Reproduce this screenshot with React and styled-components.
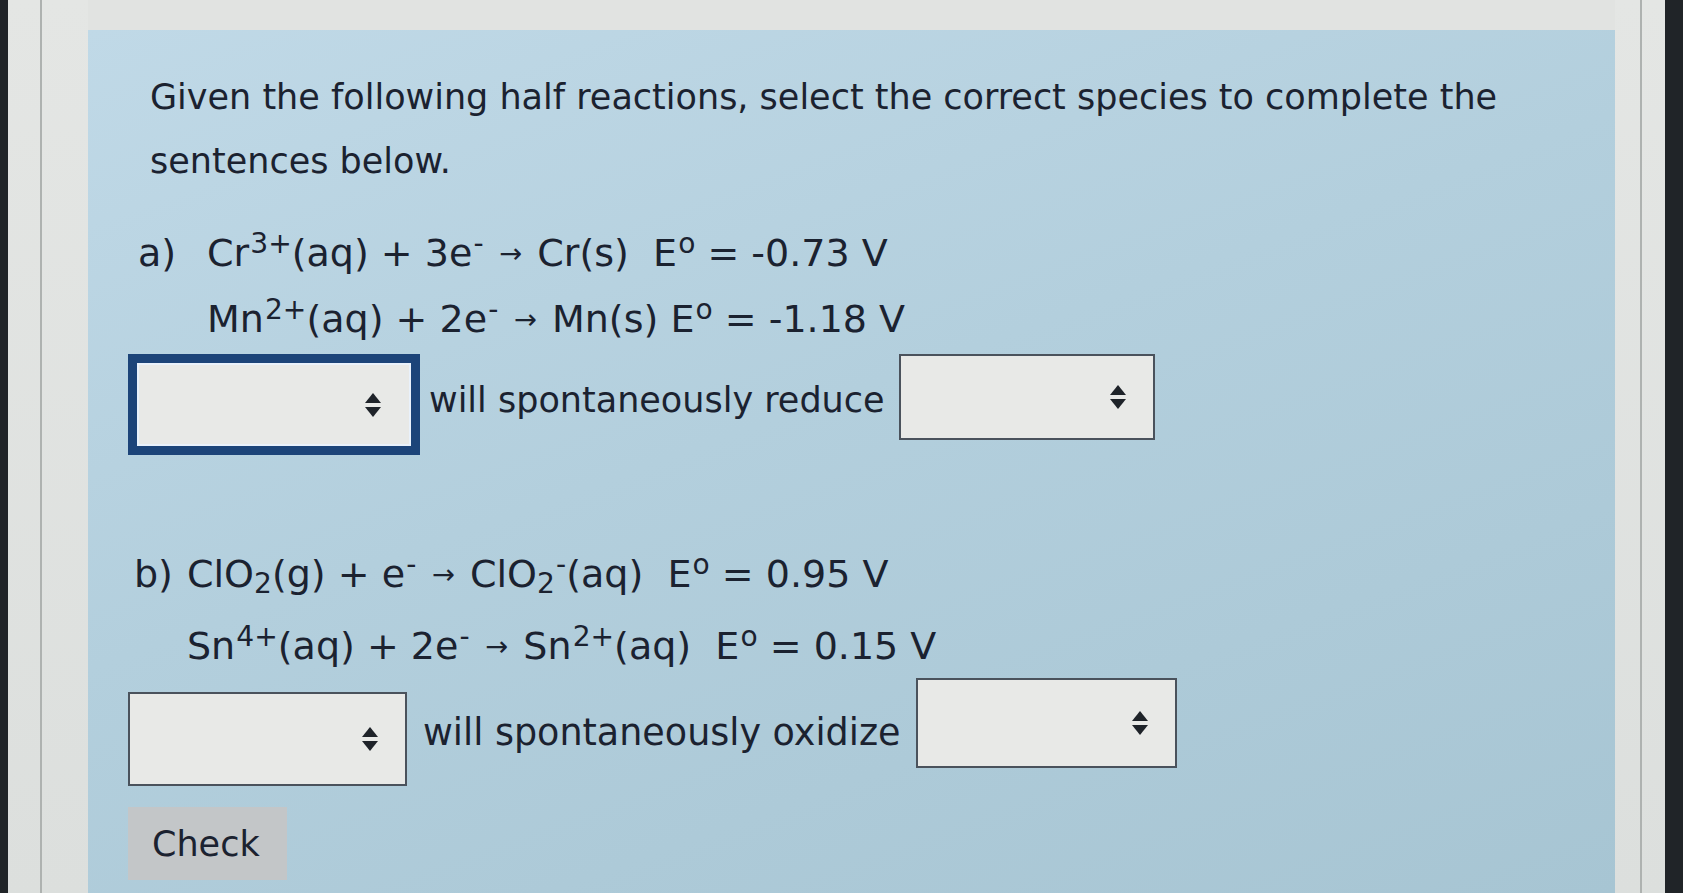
import React from "react";
import styled, { createGlobalStyle } from "styled-components";

const GlobalStyle = createGlobalStyle`
  html, body {
    margin: 0;
    padding: 0;
    height: 100%;
    overflow: hidden;
  }
  body {
    background: #e1e3e1;
    font-family: "DejaVu Sans", Verdana, sans-serif;
    color: #1b2230;
  }
`;

const Frame = styled.div`
  display: flex;
  width: 1683px;
  height: 893px;
`;

const Edge = styled.div`
  flex-shrink: 0;
  width: ${(p) => p.$w}px;
  background: #202428;
`;

const Margin = styled.div`
  flex-shrink: 0;
  box-sizing: border-box;
  display: flex;
  width: ${(p) => p.$w}px;
  padding-left: ${(p) => p.$rule}px;
  background: linear-gradient(180deg, #e4e6e4 0%, #dcdfdd 100%);
`;

const Rule = styled.div`
  width: 2px;
  background: #aeb2b0;
`;

const Panel = styled.main`
  flex: 1;
  margin-top: 30px;
  padding: 35px 0 0 40px;
  display: flex;
  flex-direction: column;
  align-items: flex-start;
  background: linear-gradient(160deg, #c0d9e7 0%, #b3cfdd 45%, #a7c5d3 100%);
  font-size: 35px;
`;

const Prompt = styled.p`
  margin: 0 0 0 22px;
  line-height: 64px;
`;

const Reaction = styled.div`
  display: flex;
  margin: ${(p) => p.$top}px 0 0 ${(p) => p.$left}px;
  font-size: 38px;
`;

const Label = styled.span`
  width: ${(p) => p.$w}px;
  flex-shrink: 0;
  line-height: ${(p) => p.$lh}px;
`;

const Equations = styled.div`
  display: flex;
  flex-direction: column;
`;

const Line = styled.div`
  height: ${(p) => p.$lh}px;
  line-height: ${(p) => p.$lh}px;
  white-space: nowrap;
`;

const Sup = styled.sup`
  font-size: 0.74em;
  vertical-align: 0.45em;
  line-height: 0;
  margin-left: 0.04em;
`;

const Sub = styled.sub`
  font-size: 0.74em;
  vertical-align: -0.22em;
  line-height: 0;
`;

const Arrow = styled.span`
  display: inline-block;
  font-size: 0.72em;
  vertical-align: 0.1em;
  line-height: 0;
  margin: 0 0.12em;
`;

const SentenceRow = styled.div`
  display: flex;
  align-items: flex-start;
  margin-top: ${(p) => p.$top}px;
`;

const Select = styled.div`
  box-sizing: border-box;
  display: flex;
  align-items: center;
  justify-content: flex-end;
  flex-shrink: 0;
  width: ${(p) => p.$w}px;
  height: ${(p) => p.$h}px;
  margin-top: ${(p) => p.$top || 0}px;
  padding-right: ${(p) => (p.$focused ? 29 : 26)}px;
  background: #e8e9e7;
  border: ${(p) => (p.$focused ? "9px solid #1c4479" : "2px solid #4a525c")};
  box-shadow: ${(p) => (p.$focused ? "inset 0 0 0 2px #e9f1fb" : "none")};
`;

const Sentence = styled.span`
  margin: ${(p) => p.$top}px ${(p) => p.$gapR}px 0 ${(p) => p.$gapL}px;
  font-size: ${(p) => p.$size}px;
  line-height: 40px;
  white-space: nowrap;
`;

const CheckButton = styled.button`
  margin-top: 21px;
  width: 159px;
  height: 73px;
  border: none;
  background: #c3c6c8;
  color: #1b2230;
  font-family: "DejaVu Sans", Verdana, sans-serif;
  font-size: 35px;
  text-align: left;
  padding: 0 0 0 24px;
`;

const Spinner = () => (
  <svg width="18" height="26" viewBox="0 0 18 26" aria-hidden="true">
    <polygon points="9,1 17,11 1,11" fill="#1e2329" />
    <polygon points="1,15 17,15 9,25" fill="#1e2329" />
  </svg>
);

const Dropdown = ({ w, h, top, focused }) => (
  <Select role="combobox" $w={w} $h={h} $top={top} $focused={focused}>
    <Spinner />
  </Select>
);

export default function App() {
  return (
    <>
      <GlobalStyle />
      <Frame>
        <Edge $w={8} />
        <Margin $w={80} $rule={32}>
          <Rule />
        </Margin>
        <Panel>
          <Prompt>
            Given the following half reactions, select the correct species to complete the
            <br />
            sentences below.
          </Prompt>

          <Reaction $top={27} $left={10}>
            <Label $w={69} $lh={66}>a)</Label>
            <Equations>
              <Line $lh={66}>
                Cr<Sup>3+</Sup>(aq) + 3e<Sup>-</Sup> <Arrow>→</Arrow> Cr(s)&nbsp; E<Sup>o</Sup> = -0.73 V
              </Line>
              <Line $lh={66}>
                Mn<Sup>2+</Sup>(aq) + 2e<Sup>-</Sup> <Arrow>→</Arrow> Mn(s) E<Sup>o</Sup> = -1.18 V
              </Line>
            </Equations>
          </Reaction>

          <SentenceRow $top={2}>
            <Dropdown w={292} h={101} focused />
            <Sentence $top={26} $gapL={9} $gapR={14} $size={35}>
              will spontaneously reduce
            </Sentence>
            <Dropdown w={256} h={86} />
          </SentenceRow>

          <Reaction $top={83} $left={6}>
            <Label $w={53} $lh={72}>b)</Label>
            <Equations>
              <Line $lh={72}>
                ClO<Sub>2</Sub>(g) + e<Sup>-</Sup> <Arrow>→</Arrow> ClO<Sub>2</Sub>
                <Sup>-</Sup>(aq)&nbsp; E<Sup>o</Sup> = 0.95 V
              </Line>
              <Line $lh={72}>
                Sn<Sup>4+</Sup>(aq) + 2e<Sup>-</Sup> <Arrow>→</Arrow> Sn<Sup>2+</Sup>(aq)&nbsp; E<Sup>o</Sup> = 0.15 V
              </Line>
            </Equations>
          </Reaction>

          <SentenceRow $top={-4}>
            <Dropdown w={279} h={94} top={14} />
            <Sentence $top={35} $gapL={16} $gapR={15} $size={36.5}>
              will spontaneously oxidize
            </Sentence>
            <Dropdown w={261} h={90} />
          </SentenceRow>

          <CheckButton type="button">Check</CheckButton>
        </Panel>
        <Margin $w={50} $rule={25}>
          <Rule />
        </Margin>
        <Edge $w={18} />
      </Frame>
    </>
  );
}
